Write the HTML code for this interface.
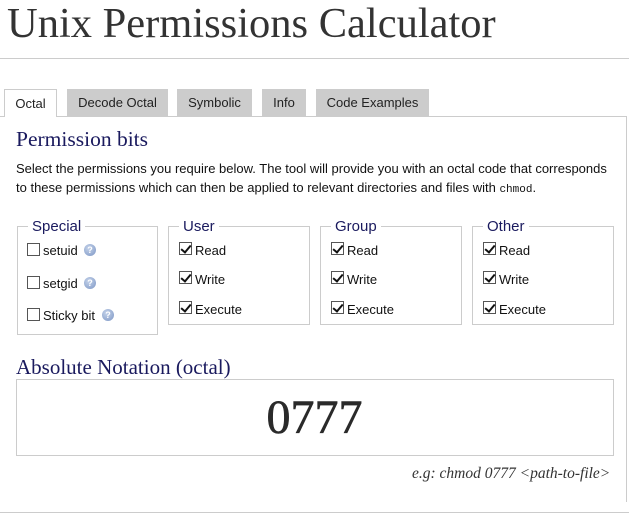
<!DOCTYPE html>
<html><head><meta charset="utf-8"><style>
*{margin:0;padding:0;box-sizing:border-box}
body{width:629px;height:516px;background:#fff;position:relative;overflow:hidden;font-family:"Liberation Sans",sans-serif;color:#111}
.a{position:absolute;white-space:nowrap}
h1{position:absolute;left:7px;top:1px;font:normal 42.5px/46px "Liberation Serif",serif;color:#333}
.tab{position:absolute;top:89px;height:27px;background:#ccc;font-size:13px;line-height:27px;text-align:center;color:#222}
.fs{position:absolute;border:1px solid #ccc;top:226px}
.lg{position:absolute;top:-9px;background:#fff;padding:0 4px;font-size:15px;line-height:17px;color:#1a1a5e}
.cb{position:absolute;width:13px;height:13px;border:1px solid #555;background:#fff}
.cb.c::after{content:"";position:absolute;left:3px;top:0px;width:4px;height:8px;border:solid #111;border-width:0 2px 2px 0;transform:rotate(40deg)}
.lb{position:absolute;font-size:13px;line-height:15px;color:#111}
.q{position:absolute;width:12px;height:12px;border-radius:50%;background:radial-gradient(circle at 40% 35%,#c5d3ea,#7b95c4);color:#fff;font-size:9px;line-height:12px;text-align:center;font-weight:bold}
</style></head><body>
<h1>Unix Permissions Calculator</h1>
<div class="a" style="left:0;top:58px;width:629px;height:1px;background:#ccc"></div>
<div class="a" style="left:0;top:116px;width:626px;height:1px;background:#ccc"></div>
<div class="a" style="left:626px;top:116px;width:1px;height:386px;background:#ccc"></div>
<div class="a" style="left:0;top:512px;width:629px;height:1px;background:#ccc"></div>
<div class="tab" style="left:4px;width:53px;height:28px;background:#fff;border:1px solid #ccc;border-bottom:none">Octal</div>
<div class="tab" style="left:67px;width:101px">Decode Octal</div>
<div class="tab" style="left:177px;width:75px">Symbolic</div>
<div class="tab" style="left:262px;width:44px">Info</div>
<div class="tab" style="left:316px;width:113px">Code Examples</div>
<div class="a" style="left:16px;top:126px;font:21.5px/26px 'Liberation Serif',serif;color:#1a1a5e">Permission bits</div>
<div class="a" style="left:16px;top:159px;font-size:13px;line-height:19px;color:#111">Select the permissions you require below. The tool will provide you with an octal code that corresponds<br>to these permissions which can then be applied to relevant directories and files with <span style="font:11px 'Liberation Mono',monospace">chmod</span>.</div>

<div class="fs" style="left:17px;width:141px;height:109px"><div class="lg" style="left:10px">Special</div></div>
<div class="cb" style="left:27px;top:243px"></div><div class="lb" style="left:43px;top:243px">setuid</div><div class="q" style="left:84px;top:244px">?</div>
<div class="cb" style="left:27px;top:276px"></div><div class="lb" style="left:43px;top:276px">setgid</div><div class="q" style="left:84px;top:277px">?</div>
<div class="cb" style="left:27px;top:308px"></div><div class="lb" style="left:43px;top:308px">Sticky bit</div><div class="q" style="left:102px;top:309px">?</div>

<div class="fs" style="left:168px;width:142px;height:99px"><div class="lg" style="left:10px">User</div></div>
<div class="fs" style="left:320px;width:142px;height:99px"><div class="lg" style="left:10px">Group</div></div>
<div class="fs" style="left:472px;width:142px;height:99px"><div class="lg" style="left:10px">Other</div></div>

<div class="cb c" style="left:179px;top:242px"></div><div class="lb" style="left:195px;top:243px">Read</div>
<div class="cb c" style="left:179px;top:271px"></div><div class="lb" style="left:195px;top:272px">Write</div>
<div class="cb c" style="left:179px;top:301px"></div><div class="lb" style="left:195px;top:302px">Execute</div>
<div class="cb c" style="left:331px;top:242px"></div><div class="lb" style="left:347px;top:243px">Read</div>
<div class="cb c" style="left:331px;top:271px"></div><div class="lb" style="left:347px;top:272px">Write</div>
<div class="cb c" style="left:331px;top:301px"></div><div class="lb" style="left:347px;top:302px">Execute</div>
<div class="cb c" style="left:483px;top:242px"></div><div class="lb" style="left:499px;top:243px">Read</div>
<div class="cb c" style="left:483px;top:271px"></div><div class="lb" style="left:499px;top:272px">Write</div>
<div class="cb c" style="left:483px;top:301px"></div><div class="lb" style="left:499px;top:302px">Execute</div>

<div class="a" style="left:16px;top:354px;font:21px/26px 'Liberation Serif',serif;color:#1a1a5e">Absolute Notation (octal)</div>
<div class="a" style="left:16px;top:379px;width:598px;height:77px;border:1px solid #ccc"></div>
<div class="a" style="left:0;width:629px;top:390px;text-align:center;font:48px/56px 'Liberation Serif',serif;color:#2a2a2a;-webkit-text-stroke:0.6px #2a2a2a">0777</div>
<div class="a" style="left:412px;top:465px;font:italic 15.5px/17px 'Liberation Serif',serif;color:#333">e.g: chmod 0777 &lt;path-to-file&gt;</div>
</body></html>
